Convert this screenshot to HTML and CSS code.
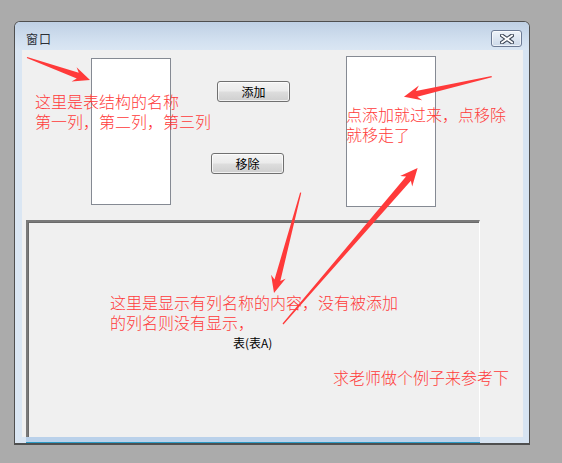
FILE: index.html
```html
<!DOCTYPE html>
<html lang="zh-CN">
<head>
<meta charset="utf-8">
<title>窗口</title>
<link rel="stylesheet" href="styles.css">
</head>
<body>
<div class="window">
  <div class="titlebar">
    <span class="title">窗口</span>
    <button class="close" aria-label="关闭">
      <svg width="14" height="10" viewBox="0 0 14 10">
        <path d="M2 1.5 L12 8.5 M12 1.5 L2 8.5" stroke="#3c4656" stroke-width="4" stroke-linecap="square" fill="none"/>
        <path d="M2 1.5 L12 8.5 M12 1.5 L2 8.5" stroke="#ffffff" stroke-width="1.8" stroke-linecap="square" fill="none"/>
      </svg>
    </button>
  </div>
  <div class="body-row">
    <div class="frame-left"></div>
    <div class="client">
      <div class="top">
        <div class="listbox list-left"></div>
        <div class="buttons">
          <button class="btn btn-add">添加</button>
          <button class="btn btn-remove">移除</button>
        </div>
        <div class="listbox list-right"></div>
      </div>
      <div class="panel">
        <div class="table-label">表(表A)</div>
      </div>
    </div>
    <div class="frame-right"></div>
  </div>
  <div class="frame-bottom">
    <div class="fb-left"></div>
    <div class="fb-strip"></div>
  </div>
</div>

<div class="annotations">
  <svg class="arrows" width="562" height="463" viewBox="0 0 562 463">
    <g fill="#ff3a3a">
      <g transform="translate(27,57.5) rotate(19.65)">
        <polygon points="0,-0.6 53.9,-3 50,-7.5 66.9,0 50,7.5 53.9,3 0,0.6"/>
      </g>
      <g transform="translate(491.7,76.7) rotate(167.15)">
        <polygon points="0,-0.6 77,-3 73,-7.5 90,0 73,7.5 77,3 0,0.6"/>
      </g>
      <g transform="translate(283,324) rotate(-49.2)">
        <polygon points="0,-0.6 192,-3.2 188.5,-8 206,0 188.5,8 192,3.2 0,0.6"/>
      </g>
      <g transform="translate(300.7,192.7) rotate(104.9)">
        <polygon points="0,-0.6 90.5,-3 87,-7.5 103.8,0 87,7.5 90.5,3 0,0.6"/>
      </g>
    </g>
  </svg>
  <div class="note note-1">这里是表结构的名称<br>第一列，第二列，第三列</div>
  <div class="note note-2">点添加就过来，点移除<br>就移走了</div>
  <div class="note note-3">这里是显示有列名称的内容，没有被添加<br>的列名则没有显示，</div>
  <div class="note note-4">求老师做个例子来参考下</div>
</div>
</body>
</html>
```

FILE: styles.css
```css
* { box-sizing: border-box; }

html, body {
  margin: 0;
  width: 562px;
  height: 463px;
  overflow: hidden;
}

body {
  position: relative;
  background: #ababab;
  padding: 21px 0 0 14px;
  font-family: "Noto Sans CJK SC", "Liberation Sans", sans-serif;
}

.window {
  width: 516px;
  height: 424px;
  border: 1px solid #4f4f4f;
  border-bottom-width: 2px;
  border-radius: 6px 6px 0 0;
  background: #d7e4f2;
  display: flex;
  flex-direction: column;
  overflow: hidden;
}

.titlebar {
  height: 28px;
  flex: none;
  display: flex;
  align-items: flex-start;
  justify-content: space-between;
  padding: 0 7px 0 11px;
  background: linear-gradient(#bfd0e4, #d3e1f0 70%, #dae6f3);
}

.title {
  font-size: 12px;
  line-height: 14px;
  margin-top: 10px;
  color: #2b2f36;
  letter-spacing: 1px;
}

.close {
  width: 31px;
  height: 17px;
  margin-top: 8px;
  padding: 0;
  border: 1px solid #6c7b95;
  border-radius: 3px;
  background: linear-gradient(#eef3f9, #dde6f1 50%, #cbd8e8);
  display: flex;
  align-items: center;
  justify-content: center;
  box-shadow: inset 0 0 0 1px rgba(255,255,255,0.6);
}

.body-row {
  display: flex;
  height: 387px;
  flex: none;
}

.frame-left { width: 7px; background: #dae6f3; }
.frame-right { width: 6px; background: #d7e4f2; }

.client {
  width: 501px;
  background: #f0f0f0;
  display: flex;
  flex-direction: column;
  overflow: hidden;
}

.top {
  height: 170px;
  flex: none;
  display: flex;
  align-items: flex-start;
}

.listbox {
  background: #ffffff;
  border: 1px solid #858a93;
}

.list-left {
  width: 80px;
  height: 147px;
  margin: 8px 0 0 69px;
}

.buttons {
  display: flex;
  flex-direction: column;
  align-items: flex-start;
  margin-left: 40px;
  width: 79px;
}

.btn {
  width: 73px;
  height: 21px;
  padding: 0;
  border: 1px solid #707070;
  border-radius: 3px;
  background: linear-gradient(#f3f3f3, #ebebeb 48%, #dddddd 52%, #cfcfcf);
  box-shadow: inset 0 0 0 1px rgba(255,255,255,0.7);
  font-family: "Noto Sans CJK SC", sans-serif;
  font-size: 12px;
  line-height: 17px;
  color: #000;
}

.btn-add { margin: 31px 0 0 6px; }
.btn-remove { margin-top: 51px; }

.list-right {
  width: 90px;
  height: 151px;
  margin: 6px 0 0 56px;
}

.panel {
  margin-left: 4px;
  width: 454px;
  height: 230px;
  flex: none;
  border-top: 2px solid #7a7a7a;
  border-left: 2px solid #7a7a7a;
  border-right: 1px solid #ffffff;
  box-shadow: inset 1px 1px 0 #6a6a6a;
  padding: 114px 0 0 205px;
}

.table-label {
  font-size: 12px;
  line-height: 14px;
  color: #000;
}

.frame-bottom {
  height: 6px;
  flex: none;
  display: flex;
}

.fb-left { width: 11px; background: #dae6f3; }

.fb-strip {
  width: 454px;
  background: #bad1ea;
  border-bottom: 1px solid #2b9ac4;
}

.annotations {
  position: absolute;
  left: 0;
  top: 0;
  width: 562px;
  height: 463px;
  pointer-events: none;
}

.arrows {
  position: absolute;
  left: 0;
  top: 0;
}

.note {
  position: absolute;
  color: #ff3a3a;
  font-size: 16px;
  line-height: 20px;
  font-weight: 300;
  white-space: nowrap;
}

.note-1 { left: 35px; top: 91px; }
.note-2 { left: 346px; top: 104px; }
.note-3 { left: 110px; top: 292px; }
.note-4 { left: 333px; top: 367px; }
```
